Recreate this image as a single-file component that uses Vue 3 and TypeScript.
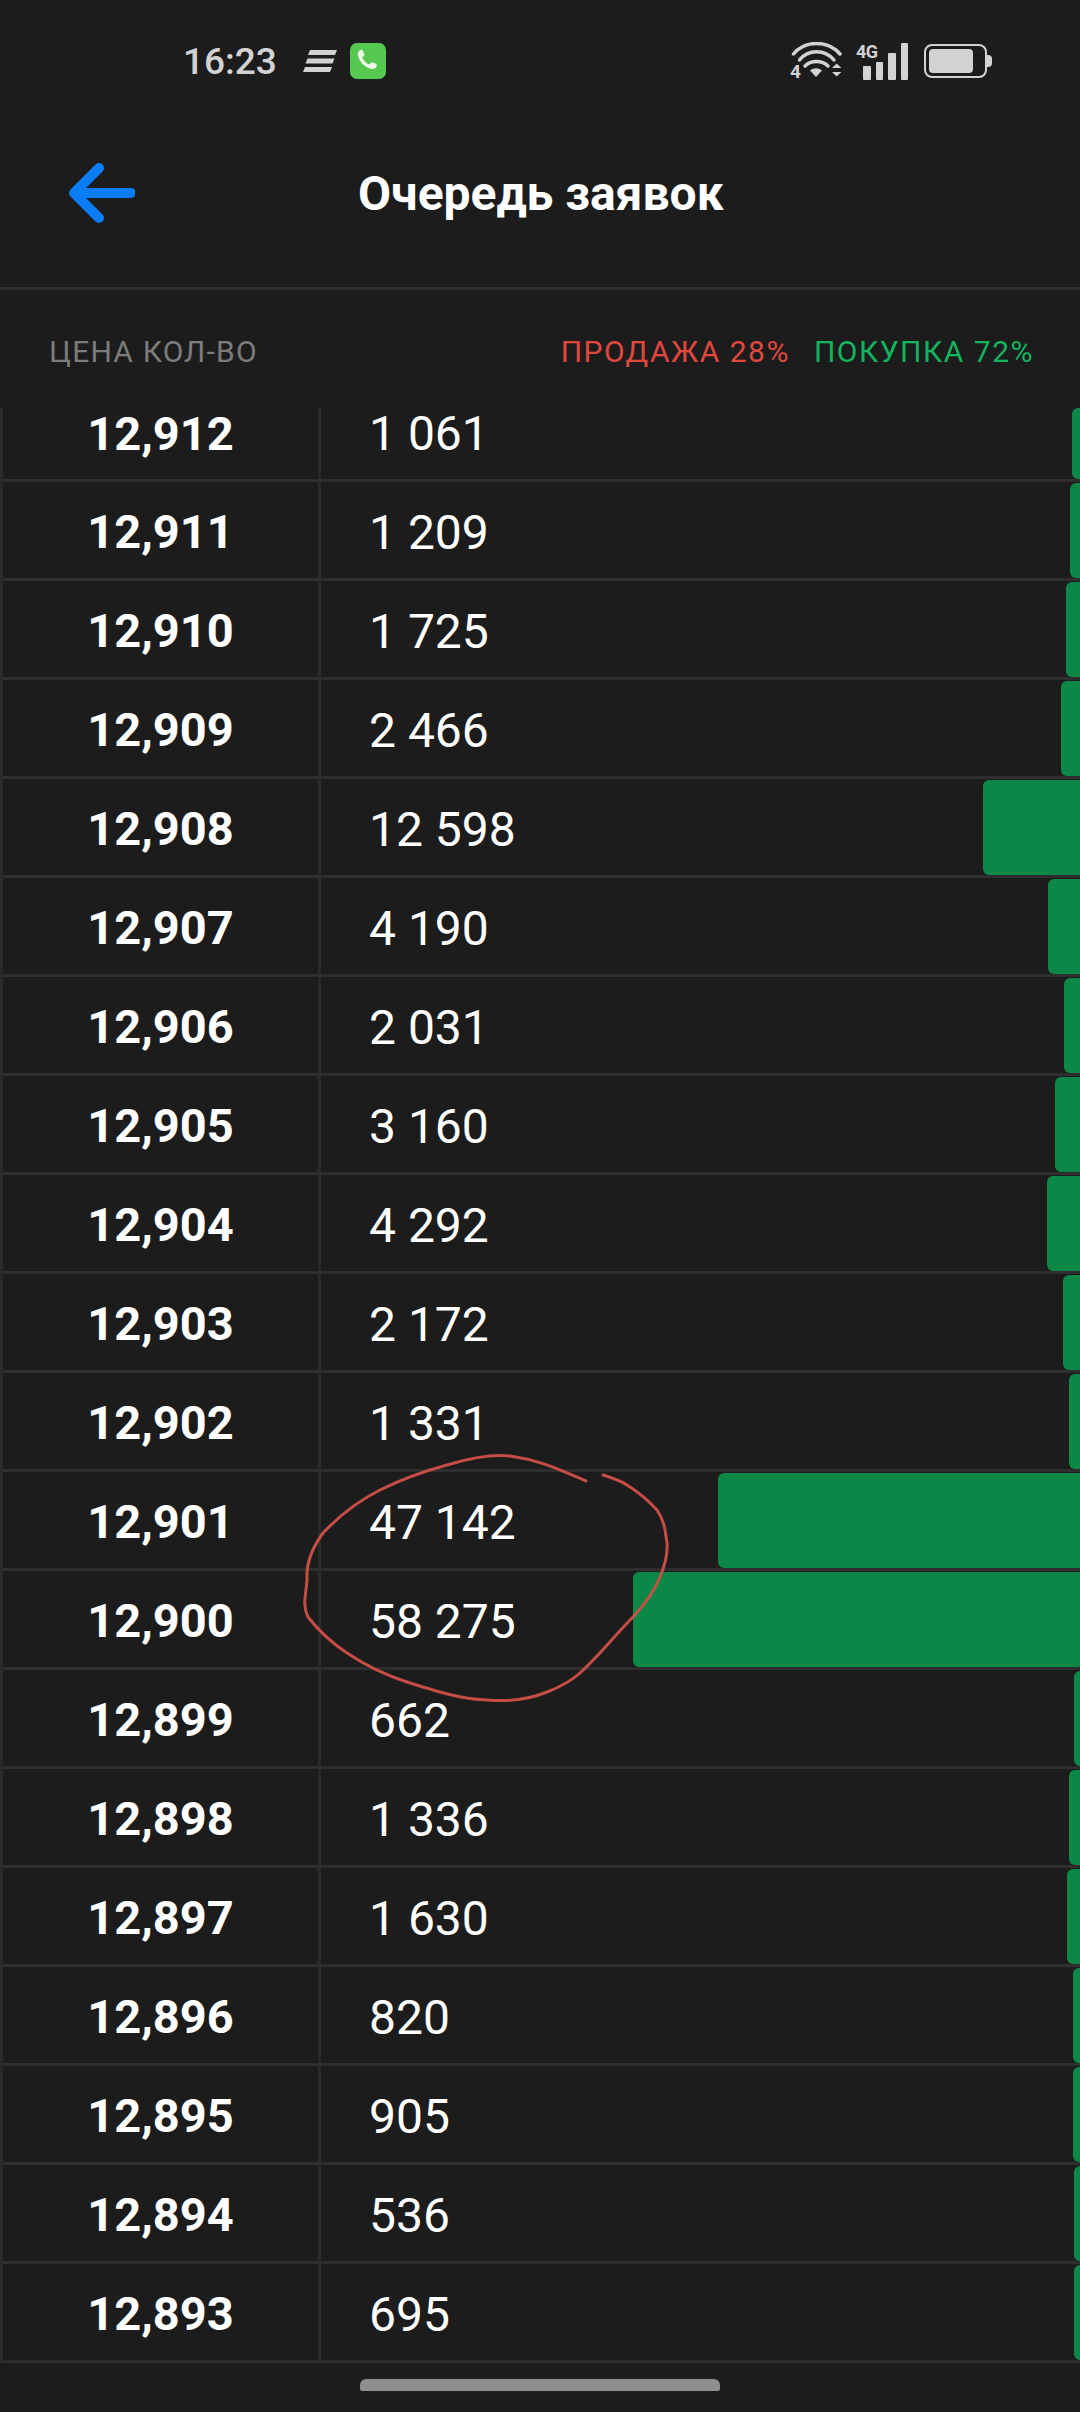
<template>
  <div class="screen">
    <div class="status">
      <div class="status-left">
        <span class="time">16:23</span>
        <svg class="stack" width="34" height="22" viewBox="0 0 34 22">
          <path d="M7 0h27l-2 5H5zM4.500 8.500h27l-2 5h-27zM2 17h27l-2 5H0z" fill="#d2d2d2" />
        </svg>
        <svg class="phone" width="36" height="36" viewBox="0 0 36 36">
          <rect width="36" height="36" rx="7" fill="#55c94f" />
          <path d="M9.500 7.500c1.500-1.200 2.800-.8 3.500.6l1.200 2.600c.4 1 .1 1.800-.7 2.500l-.9.800c-.3.300-.3.600-.1 1 1.300 2.800 3.400 5 6.100 6.300.4.200.7.100 1-.2l1-1.100c.7-.8 1.500-1 2.500-.5l2.700 1.300c1.300.7 1.600 2 .4 3.400-1.300 1.500-3 2.200-5 1.700-6.800-1.800-11.800-7.100-13.300-13.700-.4-1.900.3-3.500 1.600-4.700z" fill="#eef8e8" />
        </svg>
      </div>
      <div class="status-right">
        <div class="wifi">
          <svg width="54" height="38" viewBox="0 0 54 38">
            <path d="M3.500 12C15 -2 38 -2 50 12" fill="none" stroke="#d2d2d2" stroke-width="3.500" stroke-linecap="round" />
            <path d="M9.500 18C18 7 35 7 44 18" fill="none" stroke="#d2d2d2" stroke-width="3.500" stroke-linecap="round" />
            <path d="M15 24c6-6 17-6 23 0" fill="none" stroke="#d2d2d2" stroke-width="3.500" stroke-linecap="round" />
            <path d="M20 28.500c4-3 8-3 12 0l-6 6.500z" fill="#d2d2d2" />
            <path d="M42 26l4.700-4.500 4.700 4.500zM42 30l4.700 4.500 4.700-4.500z" fill="#d2d2d2" />
          </svg>
          <span class="wifi-four">4</span>
        </div>
        <div class="net">
          <span class="net-label">4G</span>
          <div class="signal">
            <i class="bar-1"></i><i class="bar-2"></i><i class="bar-3"></i><i class="bar-4"></i>
          </div>
        </div>
        <div class="battery">
          <div class="battery-body"><div class="battery-fill"></div></div>
          <div class="battery-tip"></div>
        </div>
      </div>
    </div>

    <header class="header">
      <svg class="back" width="68" height="60" viewBox="0 0 68 60">
        <path d="M32 5L7 30l25 25M7 30h57" fill="none" stroke="#0a7cf5" stroke-width="10" stroke-linecap="round" stroke-linejoin="round" />
      </svg>
      <h1 class="title">Очередь заявок</h1>
    </header>

    <div class="labels">
      <span class="labels-left">ЦЕНА КОЛ-ВО</span>
      <span class="labels-right">
        <span class="sell">ПРОДАЖА 28%</span>
        <span class="buy">ПОКУПКА 72%</span>
      </span>
    </div>

    <div class="book">
      <div v-for="row in rows" :key="row.price" class="row">
        <div class="price">{{ row.price }}</div>
        <div class="qty">{{ row.qty }}</div>
        <div class="depth" :style="{ width: row.depth + 'px' }"></div>
      </div>
    </div>

    <div class="home"><div class="home-pill"></div></div>

    <svg class="scribble" width="1080" height="2412" viewBox="0 0 1080 2412">
      <path
        d="M586 1481C560 1470 540 1460 510 1456C490 1454 470 1458 447 1465C425 1471 400 1480 380 1490C360 1500 340 1515 323 1533C312 1548 306 1565 307 1580C306 1595 302 1605 308 1617C318 1630 332 1643 347 1653C365 1665 385 1675 407 1682C435 1691 460 1699 487 1700C510 1702 530 1699 547 1692C560 1687 570 1682 580 1673C600 1655 615 1635 633 1617C645 1604 655 1590 660 1577C665 1565 668 1555 667 1543C665 1530 665 1522 657 1510C648 1500 638 1492 627 1485C620 1480 612 1478 603 1475"
        fill="none"
        stroke="#cf5048"
        stroke-width="3"
        stroke-linecap="round"
        opacity="0.95"
      />
    </svg>
  </div>
</template>

<script setup lang="ts">
interface Row {
  price: string;
  qty: string;
  depth: number;
}

const rows: Row[] = [
  { price: '12,912', qty: '1 061', depth: 8 },
  { price: '12,911', qty: '1 209', depth: 10 },
  { price: '12,910', qty: '1 725', depth: 14 },
  { price: '12,909', qty: '2 466', depth: 19 },
  { price: '12,908', qty: '12 598', depth: 97 },
  { price: '12,907', qty: '4 190', depth: 32 },
  { price: '12,906', qty: '2 031', depth: 16 },
  { price: '12,905', qty: '3 160', depth: 25 },
  { price: '12,904', qty: '4 292', depth: 33 },
  { price: '12,903', qty: '2 172', depth: 17 },
  { price: '12,902', qty: '1 331', depth: 11 },
  { price: '12,901', qty: '47 142', depth: 362 },
  { price: '12,900', qty: '58 275', depth: 447 },
  { price: '12,899', qty: '662', depth: 6 },
  { price: '12,898', qty: '1 336', depth: 11 },
  { price: '12,897', qty: '1 630', depth: 13 },
  { price: '12,896', qty: '820', depth: 7 },
  { price: '12,895', qty: '905', depth: 7 },
  { price: '12,894', qty: '536', depth: 6 },
  { price: '12,893', qty: '695', depth: 6 },
];
</script>

<style>
html,
body {
  margin: 0;
  background: #1c1c1c;
}
</style>

<style scoped>
.screen {
  position: relative;
  width: 1080px;
  height: 2412px;
  overflow: hidden;
  background: #1c1c1c;
  color: #fff;
  font-family: Roboto, "Noto Sans", sans-serif;
}

.status {
  display: flex;
  justify-content: space-between;
  align-items: center;
  height: 70px;
  padding: 26px 88px 4px 183px;
}

.status-left {
  display: flex;
  align-items: center;
}

.time {
  font-size: 37px;
  font-weight: 500;
  color: #d2d2d2;
  margin-right: 26px;
}

.stack {
  margin-right: 13px;
}

.status-right {
  display: flex;
  align-items: center;
}

.wifi {
  position: relative;
  height: 38px;
  margin-right: 12px;
}

.wifi svg {
  display: block;
}

.wifi-four {
  position: absolute;
  left: 0;
  bottom: -1px;
  font-size: 19px;
  font-weight: 700;
  line-height: 19px;
  color: #d2d2d2;
}

.net {
  position: relative;
  width: 52px;
  height: 37px;
  margin-right: 16px;
}

.net-label {
  position: absolute;
  left: 0;
  top: -2px;
  font-size: 18px;
  font-weight: 700;
  letter-spacing: -0.500px;
  color: #d2d2d2;
}

.signal {
  display: flex;
  align-items: flex-end;
  justify-content: flex-end;
  gap: 5px;
  height: 37px;
}

.signal i {
  display: block;
  width: 7.500px;
  background: #d2d2d2;
  border-radius: 1px;
}

.bar-1 { height: 14px; }
.bar-2 { height: 18px; }
.bar-3 { height: 27px; }
.bar-4 { height: 37px; }

.battery {
  display: flex;
  align-items: center;
}

.battery-body {
  box-sizing: border-box;
  width: 63px;
  height: 34px;
  padding: 3px;
  border: 2px solid #d2d2d2;
  border-radius: 8px;
}

.battery-fill {
  width: 44px;
  height: 100%;
  background: #d2d2d2;
  border-radius: 4px;
}

.battery-tip {
  width: 5px;
  height: 12px;
  background: #d2d2d2;
  border-radius: 0 4px 4px 0;
}

.header {
  display: flex;
  align-items: center;
  height: 186px;
  padding: 0 0 1px 67px;
  border-bottom: 3px solid #2e2e2e;
}

.back {
  flex: none;
}

.title {
  margin: 0 0 0 223px;
  font-size: 48px;
  font-weight: 700;
  white-space: nowrap;
}

.labels {
  display: flex;
  justify-content: space-between;
  align-items: center;
  height: 118px;
  padding: 4px 46px 0 49px;
  box-sizing: border-box;
  font-size: 30px;
  letter-spacing: 1.500px;
}

.labels-left {
  color: #7c7c7c;
  letter-spacing: 1.200px;
}

.labels-right {
  display: flex;
  gap: 24px;
}

.sell {
  color: #e0483e;
}

.buy {
  color: #12b45e;
}

.book {
  border-left: 3px solid #2a2a2a;
}

.row {
  box-sizing: border-box;
  display: flex;
  align-items: stretch;
  height: 99px;
  padding-top: 1px;
  border-bottom: 3px solid #2e2e2e;
}

.row:first-child {
  height: 74px;
  padding-top: 0;
}

.price {
  flex: none;
  box-sizing: border-box;
  width: 318px;
  border-right: 3px solid #2a2a2a;
  margin-top: -1px;
  font-size: 47px;
  font-weight: 700;
  line-height: 100px;
  text-align: center;
  height: 96px;
}

.qty {
  flex: 1;
  padding-left: 48px;
  font-size: 48px;
  line-height: 100px;
  height: 95px;
}

.row:first-child .price,
.row:first-child .qty {
  line-height: 52px;
  height: 71px;
}

.row:first-child .price {
  margin-top: 0;
}

.depth {
  flex: none;
  background: #0b8748;
  border-radius: 6px 0 0 6px;
}

.home {
  display: flex;
  justify-content: center;
  padding-top: 16px;
}

.home-pill {
  width: 360px;
  height: 12px;
  background: #8e8e8e;
  border-radius: 6px 6px 2px 2px;
}

.scribble {
  position: absolute;
  left: 0;
  top: 0;
  pointer-events: none;
}
</style>
